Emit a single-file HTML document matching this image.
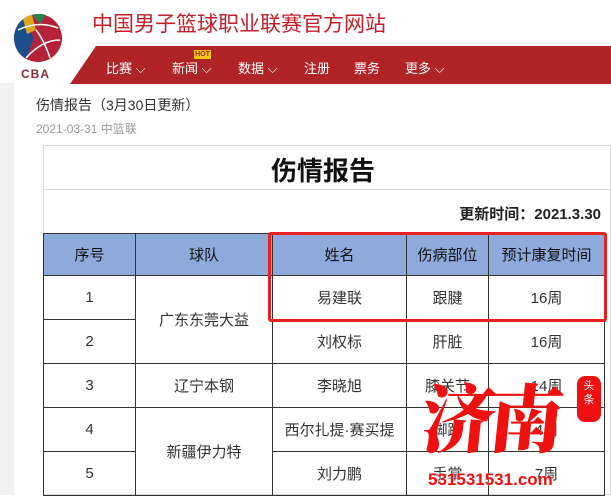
<!DOCTYPE html>
<html><head><meta charset="utf-8"><style>
*{margin:0;padding:0;box-sizing:border-box}
body{width:611px;height:495px;overflow:hidden;background:#fff;font-family:"Liberation Sans","Noto Sans CJK SC",sans-serif;position:relative}
.a{position:absolute}
.nav span{position:absolute;top:58px;color:#fff;font-size:13px}
table{position:absolute;left:43px;top:233px;border-collapse:collapse;font-size:15px;color:#333}
td{border:1px solid #333;text-align:center;height:44px;padding:0}
tr.h td{background:#8eaadb;color:#111;height:42px}
</style></head><body>
<div class="a" style="left:0;top:83px;width:14px;height:412px;background:#f2f2f2"></div>
<svg class="a" style="left:12px;top:10px" width="56" height="70" viewBox="0 0 56 70">
<circle cx="26" cy="28" r="24" fill="#b5223a"/>
<path d="M2 28 A24 24 0 0 1 11 9 L22 28 L14 49 A24 24 0 0 1 2 28Z" fill="#1d4e8c"/>
<path d="M11 9 A24 24 0 0 1 20 5 L24 20 L15 24Z" fill="#e2a323"/>
<path d="M20 5 A24 24 0 0 1 34 5 L28 14Z" fill="#2e7d4a"/>
<path d="M6 20 Q26 10 46 18 M14 48 Q30 30 48 30 M24 20 Q32 30 38 48" stroke="#fff" stroke-width="1.5" fill="none"/>
<text x="9" y="68" font-size="12" font-weight="bold" fill="#8a2b3a" font-family="Liberation Sans" letter-spacing="1">CBA</text>
</svg>
<div class="a" style="left:92px;top:8px;font-size:21px;color:#c0202a">中国男子篮球职业联赛官方网站</div>
<div class="a" style="left:70px;top:46px;width:541px;height:38px;background:#b02428;clip-path:polygon(26px 0,100% 0,100% 100%,0 100%)"></div>
<div class="nav">
<span style="left:106px">比赛 ⌵</span><span style="left:172px">新闻 ⌵</span><span style="left:238px">数据 ⌵</span><span style="left:304px">注册</span><span style="left:354px">票务</span><span style="left:405px">更多 ⌵</span>
</div>
<div class="a" style="left:194px;top:50px;width:17px;height:9px;background:#f5c518;color:#b02428;font-size:7px;line-height:9px;text-align:center;font-weight:bold">HOT</div>
<div class="a" style="left:36px;top:95px;font-size:14px;color:#333">伤情报告（3月30日更新）</div>
<div class="a" style="left:36px;top:120px;font-size:12px;color:#999">2021-03-31 中篮联</div>
<div class="a" style="left:43px;top:145px;width:568px;height:350px;border:1px solid #d8d8d8"></div>
<div class="a" style="left:43px;top:189px;width:568px;height:1px;background:#d8d8d8"></div>
<div class="a" style="left:43px;top:151px;width:560px;text-align:center;font-size:26px;font-weight:bold;color:#111">伤情报告</div>
<div class="a" style="left:43px;top:203px;width:558px;text-align:right;font-size:15px;font-weight:bold;color:#222">更新时间：2021.3.30</div>
<table>
<colgroup><col style="width:92px"><col style="width:137px"><col style="width:134px"><col style="width:82px"><col style="width:116px"></colgroup>
<tr class="h"><td>序号</td><td>球队</td><td>姓名</td><td>伤病部位</td><td>预计康复时间</td></tr>
<tr><td>1</td><td rowspan="2">广东东莞大益</td><td>易建联</td><td>跟腱</td><td>16周</td></tr>
<tr><td>2</td><td>刘权标</td><td>肝脏</td><td>16周</td></tr>
<tr><td>3</td><td>辽宁本钢</td><td>李晓旭</td><td>膝关节</td><td>14周</td></tr>
<tr><td>4</td><td rowspan="2">新疆伊力特</td><td>西尔扎提·赛买提</td><td>脚踝</td><td>4周</td></tr>
<tr><td>5</td><td>刘力鹏</td><td>手掌</td><td>7周</td></tr>
</table>
<div class="a" style="left:268px;top:232px;width:339px;height:90px;border:3px solid #e8211f;border-radius:3px"></div>
<div class="a" style="left:422px;top:370px;font-size:74px;line-height:90px;font-weight:900;color:#f01010;font-family:'Noto Serif CJK SC',serif;letter-spacing:-6px;transform:skewX(-6deg)">济南</div>
<div class="a" style="left:577px;top:376px;width:24px;height:46px;background:#f01010;border-radius:8px;color:#fff;font-size:11px;text-align:center;line-height:14px;padding-top:3px">头<br>条</div>
<div class="a" style="left:428px;top:470px;font-size:17px;font-weight:bold;color:#f01010;text-shadow:0 0 2px #fff">531531531.com</div>
</body></html>
